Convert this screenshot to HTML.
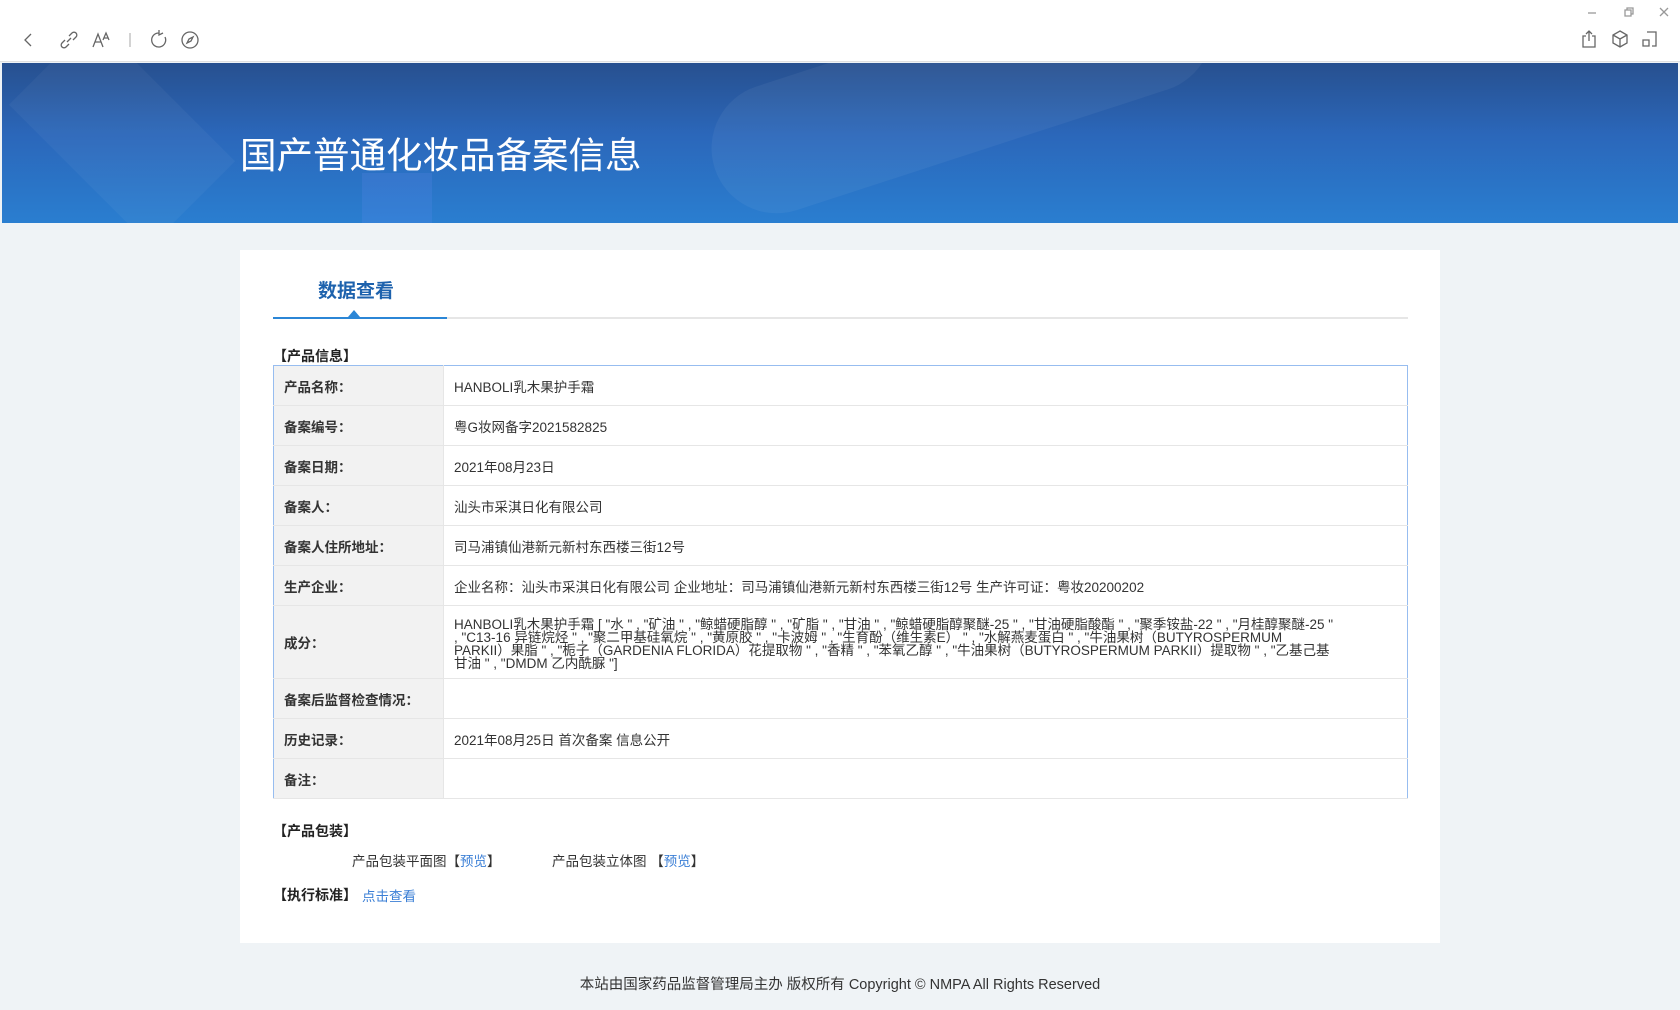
<!DOCTYPE html>
<html><head><meta charset="utf-8"><style>
*{margin:0;padding:0;box-sizing:border-box}
body{width:1680px;height:1010px;background:#eff3f6;font-family:"Liberation Sans","Noto Sans CJK SC",sans-serif;color:#333;position:relative;overflow:hidden}
.tb{position:absolute;left:0;top:0;width:1680px;height:62px;background:#fff;border-bottom:1px solid #e0e0e0}
.tb svg{position:absolute;stroke:#666;fill:none;stroke-width:1.3}
.banner{position:absolute;left:2px;top:63px;width:1676px;height:160px;background:linear-gradient(180deg,#27508f 0%,#2b67ba 45%,#2a7ed0 100%);overflow:hidden}
.banner h1{position:absolute;left:238px;top:63px;font-size:36.5px;font-weight:normal;color:#fff}
.card{position:absolute;left:240px;top:250px;width:1200px;height:693px;background:#fff}
.tab{position:absolute;left:78px;top:26px;font-size:19px;font-weight:bold;color:#1d62ad}
.tabline{position:absolute;left:33px;top:67px;width:1135px;height:2px;background:#e6e6e6}
.tabline i{position:absolute;left:0;top:0;width:174px;height:2px;background:#2b86d6}
.tri{position:absolute;left:108px;top:60px;width:0;height:0;border-left:6px solid transparent;border-right:6px solid transparent;border-bottom:7px solid #2b86d6}
.sec{position:absolute;font-size:14px;font-weight:bold;color:#222}
table{position:absolute;left:33px;top:115px;width:1135px;border-collapse:collapse;border:1px solid #97bdf0;font-size:13.5px}
td{border-bottom:1px solid #e6e6e6;height:40px;padding:0 10px;vertical-align:middle}
td.l{width:170px;background:#f2f2f2;font-weight:bold;color:#333;border-right:1px solid #e6e6e6}
td.m{line-height:13px;padding-top:3px}
.t{position:absolute;font-size:13.5px;color:#333}
a{color:#3b7fd6;text-decoration:none}
.foot{position:absolute;left:0;width:1680px;top:973px;text-align:center;font-size:14.5px;color:#333}
</style></head><body>
<div class="tb">
<svg style="left:22px;top:32px" width="14" height="16"><path d="M9 2 L3 8 L9 14"/></svg>
<svg style="left:59px;top:30px" width="20" height="20"><path d="M8 12 L12 8 M6 10 L3 13 a2.5 2.5 0 0 0 4 4 L10 14 M10 6 L13 3 a2.5 2.5 0 0 1 4 4 L14 10"/></svg>
<svg style="left:91px;top:30px" width="20" height="20"><path d="M2 17 L7 4 L12 17 M4 12 H10 M12 10 L15 3 L18 10 M13 8 H17"/></svg>
<svg style="left:128px;top:30px" width="4" height="20"><path d="M2 3 V17" stroke="#bbb"/></svg>
<svg style="left:149px;top:30px" width="20" height="20"><path d="M10 3 a7 7 0 1 0 6 4 M10 0 L10 5 L14 3"/></svg>
<svg style="left:180px;top:30px" width="20" height="20"><circle cx="10" cy="10" r="8"/><path d="M13 7 L11 11 L7 13 L9 9 Z"/></svg>
<svg style="left:1586px;top:8px" width="12" height="10"><path d="M2 5 H10" stroke="#999"/></svg>
<svg style="left:1622px;top:6px" width="12" height="12"><path d="M3 4 H9 V10 H3 Z M5 4 V2 H11 V8 H9" stroke="#999"/></svg>
<svg style="left:1658px;top:6px" width="12" height="12"><path d="M2 2 L10 10 M10 2 L2 10" stroke="#999"/></svg>
<svg style="left:1580px;top:29px" width="18" height="20"><path d="M6 7 H3 V18 H15 V7 H12 M9 12 V2 M6 5 L9 2 L12 5"/></svg>
<svg style="left:1610px;top:29px" width="20" height="20"><path d="M10 2 L17 6 V14 L10 18 L3 14 V6 Z M3 6 L10 10 L17 6 M10 10 V18"/></svg>
<svg style="left:1640px;top:29px" width="20" height="20"><path d="M7 3 H16 V17 H12 M3 11 H9 V17 H3 Z"/></svg>
</div>
<div class="banner">
<div style="position:absolute;left:700px;top:-40px;width:520px;height:130px;border-radius:70px;background:rgba(255,255,255,.05);transform:rotate(-18deg)"></div>
<div style="position:absolute;left:360px;top:110px;width:70px;height:60px;background:rgba(120,150,255,.15)"></div>
<div style="position:absolute;left:20px;top:10px;width:200px;height:120px;background:rgba(255,255,255,.04);transform:rotate(45deg)"></div>
<h1>国产普通化妆品备案信息</h1>
</div>
<div class="card">
<div class="tab">数据查看</div>
<div class="tri"></div>
<div class="tabline"><i></i></div>
<div class="sec" style="left:33px;top:96px">【产品信息】</div>
<table>
<tr><td class="l">产品名称：</td><td>HANBOLI乳木果护手霜</td></tr>
<tr><td class="l">备案编号：</td><td>粤G妆网备字2021582825</td></tr>
<tr><td class="l">备案日期：</td><td>2021年08月23日</td></tr>
<tr><td class="l">备案人：</td><td>汕头市采淇日化有限公司</td></tr>
<tr><td class="l">备案人住所地址：</td><td>司马浦镇仙港新元新村东西楼三街12号</td></tr>
<tr><td class="l">生产企业：</td><td>企业名称：汕头市采淇日化有限公司 企业地址：司马浦镇仙港新元新村东西楼三街12号 生产许可证：粤妆20200202</td></tr>
<tr><td class="l" style="height:73px">成分：</td><td class="m"><div style="width:880px">HANBOLI乳木果护手霜 [ "水 " , "矿油 " , "鲸蜡硬脂醇 " , "矿脂 " , "甘油 " , "鲸蜡硬脂醇聚醚-25 " , "甘油硬脂酸酯 " , "聚季铵盐-22 " , "月桂醇聚醚-25 " , "C13-16 异链烷烃 " , "聚二甲基硅氧烷 " , "黄原胶 " , "卡波姆 " , "生育酚（维生素E） " , "水解燕麦蛋白 " , "牛油果树（BUTYROSPERMUM PARKII）果脂 " , "栀子（GARDENIA FLORIDA）花提取物 " , "香精 " , "苯氧乙醇 " , "牛油果树（BUTYROSPERMUM PARKII）提取物 " , "乙基己基甘油 " , "DMDM 乙内酰脲 "]</div></td></tr>
<tr><td class="l">备案后监督检查情况：</td><td></td></tr>
<tr><td class="l">历史记录：</td><td>2021年08月25日 首次备案 信息公开</td></tr>
<tr><td class="l">备注：</td><td></td></tr>
</table>
<div class="sec" style="left:33px;top:571px">【产品包装】</div>
<div class="t" style="left:112px;top:600px">产品包装平面图【<a>预览</a>】</div>
<div class="t" style="left:312px;top:600px">产品包装立体图 【<a>预览</a>】</div>
<div class="sec" style="left:33px;top:635px">【执行标准】</div>
<div class="t" style="left:122px;top:635px"><a>点击查看</a></div>
</div>
<div class="foot">本站由国家药品监督管理局主办 版权所有 Copyright © NMPA All Rights Reserved</div>
</body></html>
